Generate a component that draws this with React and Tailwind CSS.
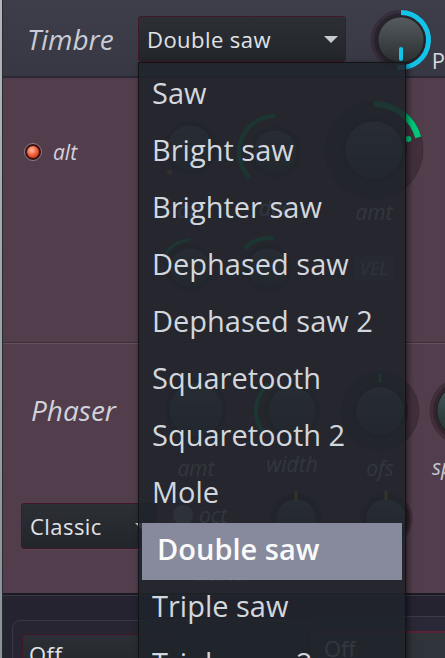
import React, { useId } from "react";

const FONT = "font-['Open_Sans','Noto_Sans',sans-serif]";

const ITEMS = [
  "Saw",
  "Bright saw",
  "Brighter saw",
  "Dephased saw",
  "Dephased saw 2",
  "Squaretooth",
  "Squaretooth 2",
  "Mole",
  "Double saw",
  "Triple saw",
  "Triple saw 2",
];

// angle 0 = 12 o'clock, clockwise
function polar(c, r, deg) {
  const a = ((deg - 90) * Math.PI) / 180;
  return [c + r * Math.cos(a), c + r * Math.sin(a)];
}

function arcPath(c, r, a1, a2) {
  const [x1, y1] = polar(c, r, a1);
  const [x2, y2] = polar(c, r, a2);
  const large = a2 - a1 > 180 ? 1 : 0;
  return `M${x1} ${y1} A${r} ${r} 0 ${large} 1 ${x2} ${y2}`;
}

function Knob({ size, r, ring, arc, dot, tick, body = ["#6b7076", "#3d4146"] }) {
  const id = useId().replace(/:/g, "");
  const c = size / 2;
  return (
    <svg width={size} height={size} viewBox={`0 0 ${size} ${size}`} className="block shrink-0">
      <defs>
        <linearGradient id={`g${id}`} x1="0" y1="0" x2="0" y2="1">
          <stop offset="0" stopColor={body[0]} />
          <stop offset="1" stopColor={body[1]} />
        </linearGradient>
      </defs>
      {ring && <circle cx={c} cy={c} r={ring} fill="rgba(40,22,34,0.35)" stroke="#3f2c3a" strokeWidth="1" />}
      <circle cx={c} cy={c} r={r + 4} fill="rgba(0,0,0,0.22)" />
      {arc && (
        <path d={arcPath(c, arc.r, arc.from, arc.to)} fill="none" stroke={arc.color} strokeWidth={arc.w || 4} />
      )}
      <circle cx={c} cy={c} r={r} fill={`url(#g${id})`} stroke="rgba(0,0,0,0.35)" strokeWidth="1" />
      {dot && <circle cx={polar(c, dot.r, dot.a)[0]} cy={polar(c, dot.r, dot.a)[1]} r={dot.s || 3} fill={dot.color} />}
      {tick && (
        <line
          x1={polar(c, tick.r1, tick.a)[0]}
          y1={polar(c, tick.r1, tick.a)[1]}
          x2={polar(c, tick.r2, tick.a)[0]}
          y2={polar(c, tick.r2, tick.a)[1]}
          stroke={tick.color}
          strokeWidth={tick.w || 3}
          strokeLinecap="round"
        />
      )}
    </svg>
  );
}

function Label({ children, className = "" }) {
  return <div className={`italic text-[21px] leading-[22px] text-[#c3c6cf] ${className}`}>{children}</div>;
}

function Led({ size = "w-[18px] h-[18px]" }) {
  return (
    <div className={`${size} rounded-full border border-[#8d7e88] bg-[#3a1212] p-[2px] shrink-0`}>
      <div className="w-full h-full rounded-full bg-[radial-gradient(circle_at_40%_35%,#ffc0a8,#f25a36_50%,#a8200f)]" />
    </div>
  );
}

function Menu() {
  return (
    <div className="absolute left-[138px] top-[62px] w-[268px] h-[600px] bg-[#1f242b]/[0.89] border border-[#121418] shadow-[2px_2px_6px_rgba(0,0,0,0.55)] pt-[4px]">
      {ITEMS.map((it) =>
        it === "Double saw" ? (
          <div key={it} className="h-[57px] mx-[3px] bg-[#878a9c] flex items-center pl-[15px] pb-[6px]">
            <span className="text-[29px] font-semibold text-[#fafafa] leading-none">{it}</span>
          </div>
        ) : (
          <div key={it} className="h-[57px] flex items-center pl-[13px] pb-[6px]">
            <span className="text-[29px] text-[#d2d6dd] leading-none">{it}</span>
          </div>
        )
      )}
    </div>
  );
}

function Select({ text, className = "", arrow = true }) {
  return (
    <div
      className={`flex items-center justify-between border border-[#431628] rounded-[3px] bg-[linear-gradient(#2c3036,#22262b)] shadow-[0_1px_0_rgba(255,255,255,0.05)] ${className}`}
    >
      <span className="text-[22px] text-[#e2e3e6] leading-none tracking-[0.02em]">{text}</span>
      {arrow && (
        <svg width="14" height="7" viewBox="0 0 14 7" className="mr-[7px]">
          <path d="M0 0 H14 L7 7 Z" fill="#c9cacd" />
        </svg>
      )}
    </div>
  );
}

export default function App() {
  return (
    <div className={`relative w-[445px] h-[658px] overflow-hidden flex bg-[#252330] ${FONT}`}>
      <div className="w-[2px] bg-[linear-gradient(#b3b7bc,#8a9097)] shrink-0" />
      <div className="w-[1px] bg-[#2a2a31] shrink-0" />

      <div className="flex-1 flex flex-col min-w-0">
        {/* header */}
        <div className="h-[78px] shrink-0 bg-[linear-gradient(#3e3d4a,#383744)] border-b-2 border-[#2a2833] flex items-start">
          <div className="w-[135px] shrink-0 pl-[24px] pt-[21px]">
            <span className="italic text-[28px] leading-[36px] text-[#c9cbd3]">Timbre</span>
          </div>
          <Select text="Double saw" className="w-[215px] h-[46px] mt-[16px] pl-[8px]" />
          <div className="ml-[23px] mt-[8px]">
            <Knob
              size={64}
              r={23}
              ring={30}
              body={["#555b5f", "#2a2e31"]}
              arc={{ r: 27.5, from: 0, to: 188, color: "#14c4e8", w: 5 }}
              tick={{ r1: 9, r2: 19, a: 180, color: "#14c4e8", w: 4 }}
            />
          </div>
          <span className="text-[22px] text-[#d6d7dd] mt-[44px] -ml-[1px]">P</span>
        </div>

        {/* section 1 */}
        <div className="h-[265px] shrink-0 bg-[#513d4b] border-b border-[#3f2d3a] flex">
          <div className="w-[135px] shrink-0 pt-[64px] pl-[21px]">
            <div className="h-[20px] flex items-center gap-[11px]">
              <Led />
              <span className="italic text-[21px] leading-none text-[#d4d2da]">alt</span>
            </div>
          </div>
          <div className="flex-1 flex flex-col">
            <div className="h-[150px] flex items-start shrink-0">
              <div className="ml-[22px] mt-[40px] flex flex-col items-center">
                <Knob size={60} r={23} dot={{ r: 32, a: 220, color: "#e08a20", s: 2.5 }} />
                <Label className="mt-[21px]">att</Label>
              </div>
              <div className="ml-[15px] mt-[34px] flex flex-col items-center">
                <Knob size={80} r={22} arc={{ r: 36, from: 225, to: 360, color: "#00c878", w: 4 }} />
                <Label className="mt-[5px]">dec</Label>
              </div>
              <div className="ml-[7px] mt-[20px] flex flex-col items-center">
                <Knob
                  size={104}
                  r={29}
                  ring={49}
                  arc={{ r: 46, from: 0, to: 74, color: "#00c878", w: 6 }}
                  dot={{ r: 36, a: 72, color: "#00c878", s: 3 }}
                />
                <Label className="-mt-[1px]">amt</Label>
              </div>
            </div>
            <div className="flex items-start">
              <div className="ml-[22px] mt-[10px]">
                <Knob size={60} r={20} arc={{ r: 28, from: 300, to: 360, color: "#00c878", w: 3 }} />
              </div>
              <div className="ml-[13px] mt-[5px]">
                <Knob size={70} r={20} arc={{ r: 30, from: 310, to: 370, color: "#00c878", w: 4 }} />
              </div>
              <div className="ml-[51px] mt-[28px] w-[40px] h-[24px] rounded-[4px] bg-[#5e525c] flex items-center justify-center">
                <span className="italic text-[18px] text-[#a8a6ae] leading-none">VEL</span>
              </div>
            </div>
          </div>
        </div>

        {/* section 2 */}
        <div className="h-[252px] shrink-0 bg-[#513d4b] border-t border-[#66525f] border-b-2 border-b-[#1c1a23] flex">
          <div className="w-[135px] shrink-0 flex flex-col">
            <div className="pl-[28px] pt-[48px]">
              <span className="italic text-[28px] leading-[36px] text-[#d2d2da]">Phaser</span>
            </div>
            <Select text="Classic" className="w-[136px] h-[46px] ml-[18px] mt-[75px] pl-[8px] shrink-0" />
          </div>
          <div className="flex-1 flex flex-col">
            <div className="h-[130px] shrink-0 flex items-start">
              <div className="ml-[26px] mt-[34px] flex flex-col items-center">
                <Knob size={64} r={27} />
                <Label className="mt-[15px]">amt</Label>
              </div>
              <div className="ml-[24px] mt-[27px] flex flex-col items-center">
                <Knob size={80} r={24} arc={{ r: 36, from: 235, to: 320, color: "#00c878", w: 4 }} />
                <Label className="mt-[2px]">width</Label>
              </div>
              <div className="ml-[6px] mt-[25px] flex flex-col items-center">
                <Knob size={84} r={24} ring={39} tick={{ r1: 30, r2: 36, a: 0, color: "#00c878", w: 3 }} />
                <Label className="mt-[4px]">ofs</Label>
              </div>
              <div className="ml-[4px] mt-[29px] flex flex-col items-center">
                <Knob size={76} r={27} ring={34} body={["#43585b", "#23302f"]} />
                <Label className="mt-[7px]">spread</Label>
              </div>
            </div>
            <div className="flex items-start">
              <div className="ml-[35px] mt-[30px] flex flex-col">
                <div className="flex items-center gap-[6px]">
                  <div className="w-[20px] h-[20px] rounded-full bg-[#9c9aa4]" />
                  <Label>oct</Label>
                </div>
                <Label className="mt-[36px] ml-[22px] not-italic">harm</Label>
              </div>
              <div className="ml-[20px] mt-[17px] flex flex-col items-center">
                <Knob size={56} r={20} ring={26} tick={{ r1: 20, r2: 27, a: 0, color: "#d8a028", w: 3 }} />
                <Label className="mt-[8px]">lfo</Label>
              </div>
              <div className="ml-[34px] mt-[17px] flex flex-col items-center">
                <Knob size={56} r={20} ring={26} tick={{ r1: 20, r2: 27, a: 0, color: "#d8a028", w: 3 }} />
                <Label className="mt-[8px]">lfo</Label>
              </div>
            </div>
          </div>
        </div>

        {/* bottom */}
        <div className="flex-1 flex items-start border-t border-[#3a3846]">
          <div className="ml-[9px] mt-[24px] w-[300px] h-[60px] shrink-0 rounded-[8px] border border-[#3a3846] bg-[#272532] pt-[13px] pl-[9px]">
            <Select text="Off" arrow={false} className="w-[160px] h-[44px] pl-[6px] items-start pt-[8px]" />
          </div>
          <div className="flex-1 flex flex-col mt-[20px]">
            <div className="h-[15px] border-t border-[#3c3a4a] bg-[#2a2837]" />
            <div className="h-[30px] border-t-2 border-[#5a2236] bg-[#2f333a] pl-[12px] pt-[4px]">
              <span className="text-[22px] text-[#d8d9dc] leading-none">Off</span>
            </div>
          </div>
        </div>
      </div>

      <Menu />
    </div>
  );
}
